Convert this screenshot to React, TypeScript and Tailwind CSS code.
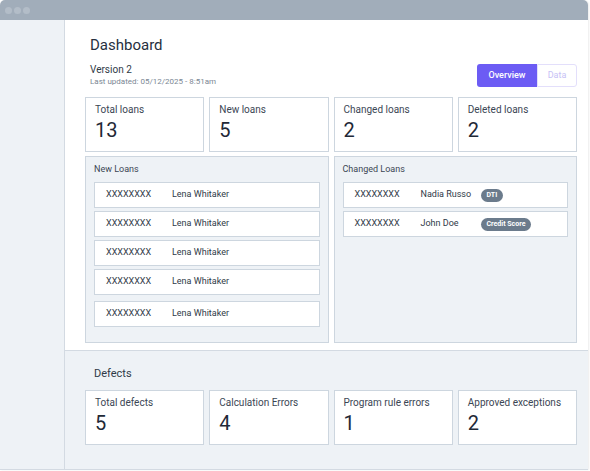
import React from 'react';

const topStats = [
  { label: 'Total loans', value: '13' },
  { label: 'New loans', value: '5' },
  { label: 'Changed loans', value: '2' },
  { label: 'Deleted loans', value: '2' },
];

const defectStats = [
  { label: 'Total defects', value: '5' },
  { label: 'Calculation Errors', value: '4' },
  { label: 'Program rule errors', value: '1' },
  { label: 'Approved exceptions', value: '2' },
];

const changedLoans = [
  { id: 'XXXXXXXX', name: 'Nadia Russo', tag: 'DTI' },
  { id: 'XXXXXXXX', name: 'John Doe', tag: 'Credit Score' },
];

function StatCard({ label, value }: { label: string; value: string }) {
  return (
    <div className="h-[55px] border border-[#cdd6df] bg-white px-[9px] pt-[5px]">
      <p className="text-[10px] leading-[13px] text-[#3b4654]">{label}</p>
      <p className="mt-[3px] text-[20px] leading-[22px] text-[#1f2937]">{value}</p>
    </div>
  );
}

function LoanRow({ id, name, tag }: { id: string; name: string; tag?: string }) {
  return (
    <div className="flex h-[26px] items-center border border-[#cdd6df] bg-white pl-[11px] text-[9px] text-[#2f3a47]">
      <span className="w-[66px]">{id}</span>
      <span className={tag ? 'w-[60px]' : ''}>{name}</span>
      {tag && (
        <span className="rounded-full bg-[#6b7b8c] px-[6px] py-[2px] text-[7px] font-bold leading-[9px] text-white">
          {tag}
        </span>
      )}
    </div>
  );
}

export default function App() {
  return (
    <div
      className="h-[471px] w-[590px] overflow-hidden bg-white"
      style={{ fontFamily: 'Roboto, "Noto Sans", sans-serif' }}
    >
      <div className="mr-[2px] flex h-[470px] flex-col overflow-hidden rounded-t-[5px] border-b border-[#d3dae2] shadow-[1px_0_2px_rgba(0,0,0,0.08)]">
        {/* Window bar */}
        <div className="flex h-[20px] items-center gap-[2px] bg-[#a1adba] pl-[5px]">
          <span className="h-[7px] w-[7px] rounded-full bg-[#b3bdc8]" />
          <span className="h-[7px] w-[7px] rounded-full bg-[#b3bdc8]" />
          <span className="h-[7px] w-[7px] rounded-full bg-[#b3bdc8]" />
        </div>

        <div className="flex flex-1">
          {/* Sidebar */}
          <div className="w-[65px] border-r border-[#d3dae2] bg-[#eef2f6]" />

          {/* Main */}
          <div className="flex flex-1 flex-col">
            <div className="bg-white pb-[7px] pl-[20px] pr-[11px] pt-[15px]">
              <h1 className="pl-[5px] text-[15px] leading-[20px] text-[#263040]">Dashboard</h1>
              <div className="mt-[8px] flex items-end justify-between">
                <div className="pl-[5px]">
                  <p className="text-[10px] leading-[13px] text-[#2f3a47]">Version 2</p>
                  <p className="mt-[1px] text-[8px] leading-[10px] text-[#7b8794]">
                    Last updated: 05/12/2025 - 8:51am
                  </p>
                </div>
                <div className="flex">
                  <button className="h-[23px] w-[60px] rounded-l-[3px] bg-[#6c5cf4] text-[9px] font-medium text-white">
                    Overview
                  </button>
                  <button className="h-[23px] w-[40px] rounded-r-[3px] border border-[#e3dffb] text-[9px] text-[#c7c1f6]">
                    Data
                  </button>
                </div>
              </div>

              <div className="mt-[10px] grid grid-cols-4 gap-[5px]">
                {topStats.map((s) => (
                  <StatCard key={s.label} label={s.label} value={s.value} />
                ))}
              </div>

              <div className="mt-[4px] grid grid-cols-2 gap-[5px]">
                <div className="h-[187px] border border-[#cdd6df] bg-[#eef2f6] px-[8px] pt-[6px]">
                  <p className="text-[9px] leading-[12px] text-[#3b4654]">New Loans</p>
                  <div className="mt-[7px] flex flex-col gap-[3px]">
                    <LoanRow id="XXXXXXXX" name="Lena Whitaker" />
                    <LoanRow id="XXXXXXXX" name="Lena Whitaker" />
                    <LoanRow id="XXXXXXXX" name="Lena Whitaker" />
                    <LoanRow id="XXXXXXXX" name="Lena Whitaker" />
                  </div>
                  <div className="mt-[6px]">
                    <LoanRow id="XXXXXXXX" name="Lena Whitaker" />
                  </div>
                </div>
                <div className="h-[187px] border border-[#cdd6df] bg-[#eef2f6] px-[8px] pt-[6px]">
                  <p className="text-[9px] leading-[12px] text-[#3b4654]">Changed Loans</p>
                  <div className="mt-[7px] flex flex-col gap-[3px]">
                    {changedLoans.map((l) => (
                      <LoanRow key={l.name} id={l.id} name={l.name} tag={l.tag} />
                    ))}
                  </div>
                </div>
              </div>
            </div>

            {/* Defects */}
            <div className="flex-1 border-t border-[#d3dae2] bg-[#eef2f6] pl-[20px] pr-[11px] pt-[16px]">
              <h2 className="pl-[9px] text-[11px] leading-[14px] text-[#2f3a47]">Defects</h2>
              <div className="mt-[9px] grid grid-cols-4 gap-[5px]">
                {defectStats.map((s) => (
                  <StatCard key={s.label} label={s.label} value={s.value} />
                ))}
              </div>
            </div>
          </div>
        </div>
      </div>
    </div>
  );
}
